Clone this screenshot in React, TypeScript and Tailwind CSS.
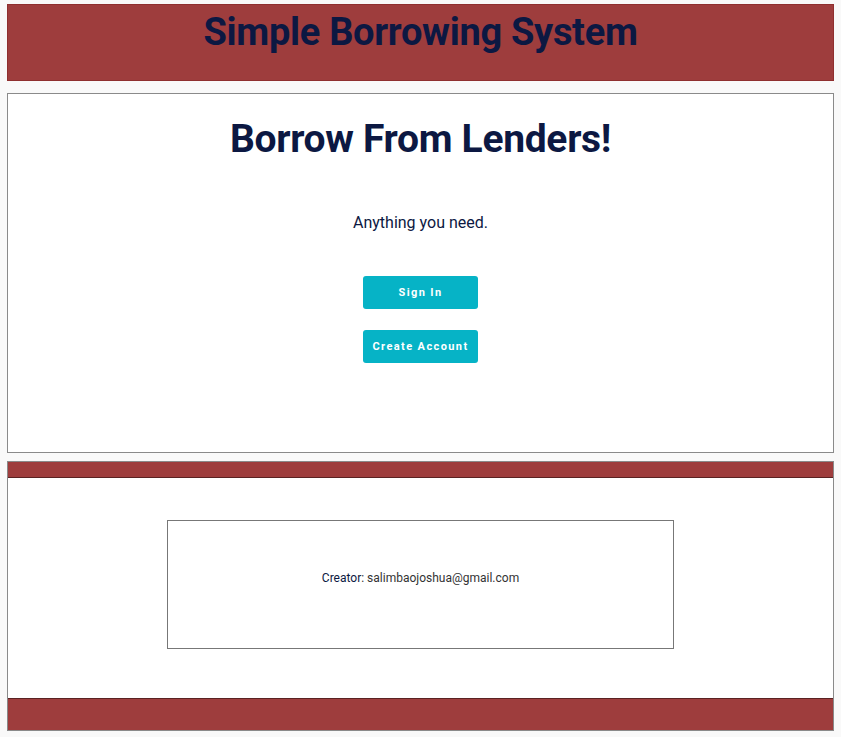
const App: React.FC = () => {
  return (
    <div className="min-h-screen bg-[#f9f9f9] px-[7px] pt-[4px] font-['Roboto',sans-serif] text-[#0c1842]">
      {/* Header */}
      <header className="h-[77px] border border-[#8f2f2f] bg-[#9e3d3d]">
        <h1 className="pt-[3px] text-center text-[38px] font-bold leading-[48px] tracking-[-0.3px]">
          Simple Borrowing System
        </h1>
      </header>

      {/* Hero card */}
      <main className="mt-[12px] flex h-[360px] flex-col items-center border border-[#8a8a8a] bg-white">
        <h2 className="mt-[20px] text-[39px] font-bold leading-[50px] tracking-[-0.3px]">
          Borrow From Lenders!
        </h2>
        <p className="mt-[49px] text-[16px] leading-[20px]">Anything you need.</p>
        <button className="mt-[43px] h-[33px] w-[115px] rounded-[3px] bg-[#06b3c6] pt-[2px] text-[11px] font-bold tracking-[1.4px] text-white">
          Sign In
        </button>
        <button className="mt-[21px] h-[33px] w-[115px] rounded-[3px] bg-[#06b3c6] pt-[2px] text-[11px] font-bold tracking-[1.4px] text-white">
          Create Account
        </button>
      </main>

      {/* Footer */}
      <footer className="mt-[8px] flex h-[270px] flex-col border border-[#8a8a8a] bg-white">
        <div className="h-[16px] border-b border-[#5a2222] bg-[#9e3d3d]" />
        <div className="flex flex-1 justify-center pt-[42px]">
          <div className="h-[129px] w-[507px] border border-[#777] pt-[44px] text-center">
            <span className="text-[12px] leading-[16px] text-[#333]">
              <span className="text-[#0c1842]">Creator</span>: salimbaojoshua@gmail.com
            </span>
          </div>
        </div>
        <div className="h-[32px] border-t border-[#5a2222] bg-[#9e3d3d]" />
      </footer>
    </div>
  );
};

export default App;
